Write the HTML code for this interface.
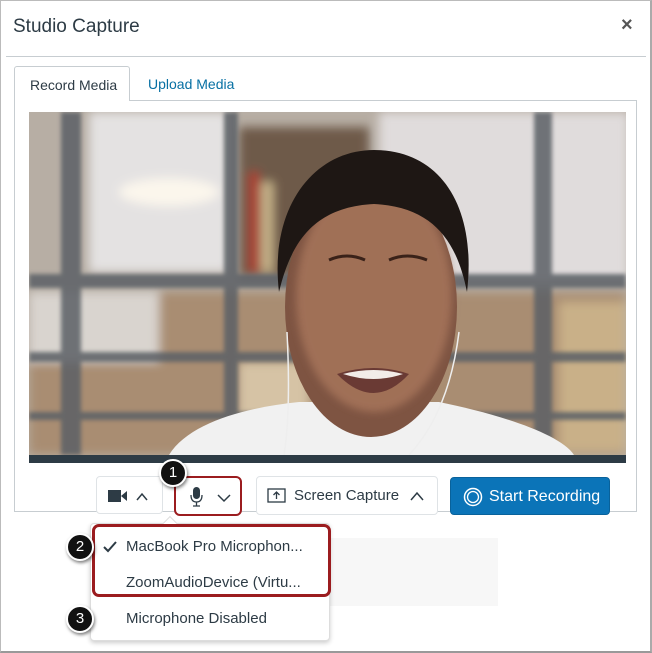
<!DOCTYPE html>
<html><head><style>
*{margin:0;padding:0;box-sizing:border-box}
body{width:652px;height:653px;background:#fff;position:relative;overflow:hidden;font-family:"Liberation Sans",sans-serif;color:#2d3b45}
.a{position:absolute}
.btn{position:absolute;background:#fff;border:1px solid #dfe3e6;border-radius:4px}
.circ{position:absolute;width:28px;height:28px;border-radius:50%;background:#111;border:2px solid #fff;box-shadow:1px 2px 3px rgba(0,0,0,.5);color:#fff;font-size:15px;text-align:center;line-height:24px}
</style></head><body>
<div class="a" style="left:0;top:0;width:652px;height:653px;border:1px solid #bbb;border-bottom:2px solid #999;border-right:2px solid #aaa"></div>
<div class="a" style="left:13px;top:16px;font-size:19px">Studio Capture</div>
<div class="a" style="left:621px;top:14px;font-size:20px;font-weight:bold;color:#555">×</div>
<div class="a" style="left:6px;top:56px;width:640px;height:1px;background:#c7cdd1"></div>
<div class="a" style="left:14px;top:100px;width:623px;height:412px;border:1px solid #c7cdd1"></div>
<div class="a" style="left:14px;top:66px;width:116px;height:35px;border:1px solid #c7cdd1;border-bottom:none;background:#fff;border-radius:3px 3px 0 0;font-size:14px;padding:10px 0 0 15px">Record Media</div>
<div class="a" style="left:148px;top:76px;font-size:14px;color:#0770a3">Upload Media</div>
<svg class="a" style="left:29px;top:112px" width="597" height="343" viewBox="0 0 597 343">
<defs><filter id="b"><feGaussianBlur stdDeviation="5"/></filter><filter id="s"><feGaussianBlur stdDeviation="2"/></filter><filter id="f"><feGaussianBlur stdDeviation="4"/></filter></defs>
<rect width="597" height="343" fill="#b7aea4"/>
<g filter="url(#b)">
<rect x="60" y="0" width="140" height="160" fill="#e4e2e2"/>
<rect x="350" y="0" width="250" height="170" fill="#e0dcdc"/>
<rect x="210" y="15" width="130" height="150" fill="#6e5a48"/>
<rect x="0" y="180" width="597" height="163" fill="#a98d72"/>
<rect x="530" y="190" width="67" height="150" fill="#c9b088"/>
<rect x="210" y="250" width="70" height="90" fill="#d6c3a5"/>
<rect x="0" y="180" width="130" height="70" fill="#d9d4cf"/>
<ellipse cx="140" cy="80" rx="50" ry="14" fill="#fbf6ec"/>
<rect x="220" y="60" width="10" height="100" fill="#b03a2e"/>
<rect x="232" y="70" width="12" height="90" fill="#c7b48a"/>
</g>
<g fill="#5c6166" opacity=".85" filter="url(#s)">
<rect x="32" y="0" width="20" height="343"/>
<rect x="195" y="0" width="14" height="343"/>
<rect x="505" y="0" width="18" height="343"/>
<rect x="0" y="162" width="597" height="14"/>
<rect x="0" y="240" width="597" height="10"/>
<rect x="0" y="300" width="597" height="8"/>
</g>
<path d="M140 343 C160 310 220 295 270 290 L410 290 C460 300 530 320 545 343 Z" fill="#f1f1f1"/>
<ellipse cx="342" cy="195" rx="86" ry="130" fill="#7e5442"/>
<ellipse cx="345" cy="185" rx="78" ry="115" fill="#a06f57" filter="url(#f)"/>
<path d="M250 180 C240 95 285 38 345 38 C412 38 448 95 438 180 C428 130 405 95 345 92 C285 95 262 130 250 180Z" fill="#1e1714"/>
<path d="M300 148 Q318 140 336 148 M360 148 Q378 140 398 148" stroke="#3a2219" stroke-width="3" fill="none"/>
<path d="M308 262 Q345 250 380 262 Q345 300 308 262Z" fill="#6a3a34"/>
<path d="M314 262 Q345 254 374 262 Q345 272 314 262Z" fill="#f2ece8"/>
<path d="M258 220 Q262 300 255 343 M430 220 Q420 300 380 343" stroke="#eee" stroke-width="1.5" fill="none"/>
</svg>
<div class="a" style="left:29px;top:455px;width:597px;height:8px;background:#2d3b45"></div>
<div class="btn" style="left:96px;top:476px;width:67px;height:38px">
<svg class="a" style="left:10px;top:11px" width="46" height="16"><rect x="1" y="2" width="13" height="12" fill="#2d3b45"/><path d="M14 8 L20 3 L20 13 Z" fill="#2d3b45"/><path d="M30 12 L35 6 L40 12" stroke="#2d3b45" stroke-width="1.5" fill="none"/></svg></div>
<div class="btn" style="left:174px;top:476px;width:68px;height:40px;border:2.5px solid #9b1c1f;border-radius:6px">
<svg class="a" style="left:14px;top:8px" width="46" height="22"><rect x="3" y="1" width="7" height="12" rx="3.5" fill="#2d3b45"/><path d="M1 9 Q1 16 6.5 16 Q12 16 12 9 M6.5 16 V20 M3 20 H10" stroke="#2d3b45" stroke-width="1.3" fill="none"/><path d="M28 9 L34 15 L40 9" stroke="#2d3b45" stroke-width="1.5" fill="none"/></svg></div>
<div class="btn" style="left:256px;top:476px;width:182px;height:39px">
<svg class="a" style="left:10px;top:11px" width="20" height="16"><rect x="1" y="1" width="17" height="13" fill="none" stroke="#2d3b45" stroke-width="1.3"/><path d="M9.5 11 V4 M6.5 7 L9.5 4 L12.5 7" stroke="#2d3b45" stroke-width="1.3" fill="none"/></svg>
<div class="a" style="left:37px;top:10px;font-size:15px">Screen Capture</div>
<svg class="a" style="left:152px;top:13px" width="18" height="12"><path d="M2 10 L8 3 L14 10" stroke="#2d3b45" stroke-width="1.5" fill="none"/></svg></div>
<div class="a" style="left:450px;top:477px;width:160px;height:38px;background:#0b74b8;border-radius:4px;border:1px solid #09629b">
<svg class="a" style="left:12px;top:9px" width="20" height="20"><circle cx="10" cy="10" r="8.5" stroke="#fff" stroke-width="1.5" fill="none"/><circle cx="10" cy="10" r="5.5" stroke="#fff" stroke-width="1.3" fill="none"/></svg>
<div class="a" style="left:38px;top:10px;font-size:16px;color:#fff">Start Recording</div></div>
<div class="a" style="left:330px;top:538px;width:168px;height:68px;background:#f7f7f7"></div>
<div class="a" style="left:90px;top:523px;width:240px;height:118px;background:#fff;border:1px solid #ddd;border-radius:4px;box-shadow:0 2px 5px rgba(0,0,0,.2)"></div>
<div class="a" style="left:165px;top:518px;width:10px;height:10px;background:#fff;border-left:1px solid #ddd;border-top:1px solid #ddd;transform:rotate(45deg)"></div>
<div class="a" style="left:92px;top:524px;width:239px;height:73px;border:3px solid #9b1c1f;border-radius:7px"></div>
<svg class="a" style="left:102px;top:540px" width="16" height="14"><path d="M2 7 L6 11 L14 2" stroke="#2d3b45" stroke-width="2" fill="none"/></svg>
<div class="a" style="left:126px;top:538px;font-size:15px">MacBook Pro Microphon...</div>
<div class="a" style="left:126px;top:574px;font-size:15px">ZoomAudioDevice (Virtu...</div>
<div class="a" style="left:126px;top:610px;font-size:15px">Microphone Disabled</div>
<div class="circ" style="left:159px;top:459px">1</div>
<div class="circ" style="left:66px;top:533px">2</div>
<div class="circ" style="left:66px;top:605px">3</div>
</body></html>
